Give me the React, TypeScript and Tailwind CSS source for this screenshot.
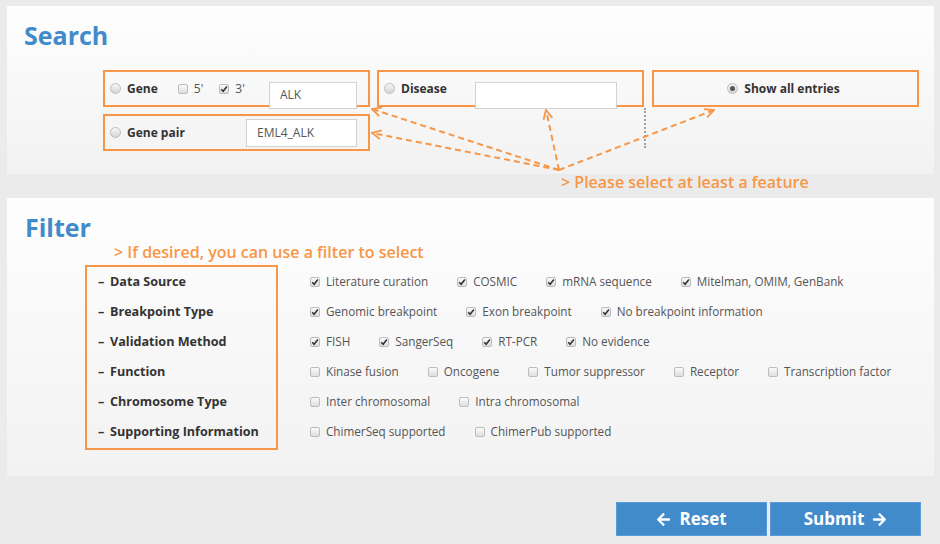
import React from "react";
import { FaArrowLeft, FaArrowRight } from "react-icons/fa";

const O = "#f79646";

function Radio({ checked = false }: { checked?: boolean }) {
  return (
    <span className="flex h-[11px] w-[11px] shrink-0 items-center justify-center rounded-full border border-[#bdbdbd] bg-linear-to-b from-[#f6f6f6] to-[#d6d6d6]">
      {checked && <span className="h-[5px] w-[5px] rounded-full bg-[#555]" />}
    </span>
  );
}

function Check({ checked = false }: { checked?: boolean }) {
  return (
    <span className="flex h-[10px] w-[10px] shrink-0 items-center justify-center rounded-[2px] border border-[#bcbcbc] bg-linear-to-b from-[#fafafa] to-[#dedede]">
      {checked && (
        <svg width="8" height="8" viewBox="0 0 8 8">
          <path d="M1.2 4.3 L3.1 6.2 L6.9 1.6" fill="none" stroke="#333" strokeWidth="1.6" />
        </svg>
      )}
    </span>
  );
}

function Item({ label, checked }: { label: string; checked: boolean }) {
  return (
    <div className="flex items-center">
      <Check checked={checked} />
      <span className="ml-[6px] whitespace-nowrap text-[11.7px] text-[#555]">{label}</span>
    </div>
  );
}

const rows: { label: string; items: string[]; checked: boolean }[] = [
  { label: "Data Source", items: ["Literature curation", "COSMIC", "mRNA sequence", "Mitelman, OMIM, GenBank"], checked: true },
  { label: "Breakpoint Type", items: ["Genomic breakpoint", "Exon breakpoint", "No breakpoint information"], checked: true },
  { label: "Validation Method", items: ["FISH", "SangerSeq", "RT-PCR", "No evidence"], checked: true },
  { label: "Function", items: ["Kinase fusion", "Oncogene", "Tumor suppressor", "Receptor", "Transcription factor"], checked: false },
  { label: "Chromosome Type", items: ["Inter chromosomal", "Intra chromosomal"], checked: false },
  { label: "Supporting Information", items: ["ChimerSeq supported", "ChimerPub supported"], checked: false },
];

export default function App() {
  return (
    <div className="relative h-[544px] w-[940px] overflow-hidden bg-[#ebebeb] px-[7px] pt-[6px] font-['Open_Sans',sans-serif]">
      {/* Search panel */}
      <div className="h-[168px] w-[927px] bg-linear-to-b from-[#fefefe] to-[#f2f2f2] pl-[17px] pt-[14px]">
        <h1 className="text-[25px] font-bold leading-[31px] text-[#428bca]">Search</h1>
        <div className="ml-[79px] mt-[19px] flex flex-col gap-[7px]">
          <div className="flex">
            {/* Gene */}
            <div className="flex h-[37px] w-[267px] items-center border-2 border-[#f79646] pl-[5px]">
              <Radio />
              <span className="ml-[6px] text-[12px] font-bold text-[#333]">Gene</span>
              <span className="ml-[20px]"><Check /></span>
              <span className="ml-[6px] text-[12px] text-[#555]">5'</span>
              <span className="ml-[16px]"><Check checked /></span>
              <span className="ml-[6px] text-[12px] text-[#555]">3'</span>
              <div className="ml-auto mr-[11px] mt-[13px] flex h-[27px] w-[88px] items-center border border-[#d2d2d2] bg-white pl-[10px] text-[12px] text-[#555]">
                ALK
              </div>
            </div>
            {/* Disease */}
            <div className="ml-[7px] flex h-[37px] w-[267px] items-center border-2 border-[#f79646] pl-[5px]">
              <Radio />
              <span className="ml-[6px] text-[12px] font-bold text-[#333]">Disease</span>
              <div className="ml-auto mr-[25px] mt-[13px] h-[27px] w-[142px] border border-[#d2d2d2] bg-white" />
            </div>
            {/* Show all */}
            <div className="ml-[8px] flex h-[37px] w-[267px] items-center justify-center border-2 border-[#f79646] pr-[4px]">
              <Radio checked />
              <span className="ml-[6px] text-[12px] font-bold text-[#333]">Show all entries</span>
            </div>
          </div>
          <div className="flex">
            <div className="flex h-[37px] w-[267px] items-center border-2 border-[#f79646] pl-[5px]">
              <Radio />
              <span className="ml-[6px] text-[12px] font-bold text-[#333]">Gene pair</span>
              <div className="ml-auto mr-[11px] flex h-[28px] w-[111px] items-center border border-[#d2d2d2] bg-white pl-[10px] text-[12px] text-[#555]">
                EML4_ALK
              </div>
            </div>
            <div className="ml-[274px] -mt-[6px] h-[40px] w-0 border-l-2 border-dotted border-[#a0a0a0]" />
          </div>
        </div>
      </div>

      {/* note */}
      <div className="h-[25px] pl-[554px]">
        <p className="-mt-[1px] text-[16px] font-semibold leading-[19px] text-[#f79646]">&gt; Please select at least a feature</p>
      </div>

      {/* Filter panel */}
      <div className="h-[278px] w-[927px] bg-linear-to-b from-[#fefefe] to-[#f2f2f2] pl-[18px] pt-[14px]">
        <h2 className="text-[25px] font-bold leading-[31px] text-[#428bca]">Filter</h2>
        <p className="ml-[89px] text-[16px] font-semibold leading-[19px] text-[#f79646]">&gt; If desired, you can use a filter to select</p>
        <div className="ml-[60px] mt-[3px] flex items-start">
          <div className="h-[185px] w-[193px] border-2 border-[#f79646] pl-[11px]">
            <div className="flex flex-col">
              {rows.map((r) => (
                <div key={r.label} className="flex h-[30px] items-center text-[12.6px] font-bold text-[#333]">
                  <span className="w-[12px]">–</span>
                  <span>{r.label}</span>
                </div>
              ))}
            </div>
          </div>
          <div className="ml-[32px] mt-[2px] flex flex-col">
            {rows.map((r) => (
              <div key={r.label} className="flex h-[30px] items-center gap-[29px]">
                {r.items.map((it) => (
                  <Item key={it} label={it} checked={r.checked} />
                ))}
              </div>
            ))}
          </div>
        </div>
      </div>

      {/* Buttons */}
      <div className="mt-[26px] flex justify-end gap-[3px] pr-[12px]">
        <button className="flex h-[34px] w-[151px] items-center justify-center gap-[8px] border border-[#5a9bd5] bg-[#428bca] text-[17px] font-bold text-white">
          <FaArrowLeft size={15} />
          <span>Reset</span>
        </button>
        <button className="flex h-[34px] w-[151px] items-center justify-center gap-[8px] border border-[#5a9bd5] bg-[#428bca] text-[17px] font-bold text-white">
          <span>Submit</span>
          <FaArrowRight size={15} />
        </button>
      </div>

      {/* annotation arrows */}
      <svg className="pointer-events-none absolute left-0 top-0" width="940" height="544">
        <defs>
          <marker id="ah" viewBox="0 0 12 12" refX="11" refY="6" markerWidth="12" markerHeight="12" markerUnits="userSpaceOnUse" orient="auto">
            <path d="M2 1.5 L11 6 L2 10.5" fill="none" stroke={O} strokeWidth="1.8" />
          </marker>
        </defs>
        <g stroke={O} strokeWidth="2" strokeDasharray="6 4" fill="none">
          <line x1="559" y1="170" x2="372" y2="109" markerEnd="url(#ah)" />
          <line x1="559" y1="170" x2="372" y2="133" markerEnd="url(#ah)" />
          <line x1="559" y1="170" x2="546" y2="110" markerEnd="url(#ah)" />
          <line x1="559" y1="170" x2="714" y2="110" markerEnd="url(#ah)" />
        </g>
      </svg>
    </div>
  );
}
